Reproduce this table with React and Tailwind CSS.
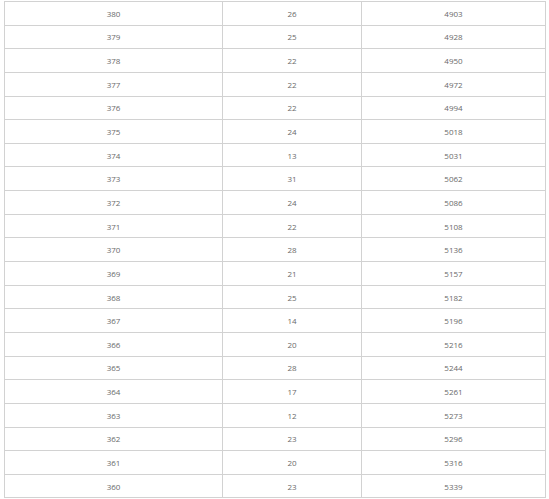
import React from "react";

const rows = [
  [380, 26, 4903],
  [379, 25, 4928],
  [378, 22, 4950],
  [377, 22, 4972],
  [376, 22, 4994],
  [375, 24, 5018],
  [374, 13, 5031],
  [373, 31, 5062],
  [372, 24, 5086],
  [371, 22, 5108],
  [370, 28, 5136],
  [369, 21, 5157],
  [368, 25, 5182],
  [367, 14, 5196],
  [366, 20, 5216],
  [365, 28, 5244],
  [364, 17, 5261],
  [363, 12, 5273],
  [362, 23, 5296],
  [361, 20, 5316],
  [360, 23, 5339],
];

export default function App() {
  return (
    <div className="w-[549px] h-[499px] bg-white overflow-hidden pt-px pl-1" style={{ fontFamily: '"Open Sans", sans-serif' }}>
      <table className="w-[541px] border-collapse table-fixed text-[8px] text-[#6a6a6a]">
        <colgroup>
          <col className="w-[218px]" />
          <col className="w-[139px]" />
          <col className="w-[184px]" />
        </colgroup>
        <tbody>
          {rows.map((r, i) => (
            <tr key={i} className="h-[23.65px]">
              {r.map((v, j) => (
                <td key={j} className="border border-[#d2d2d2] text-center p-0 pt-px leading-none">
                  {v}
                </td>
              ))}
            </tr>
          ))}
        </tbody>
      </table>
    </div>
  );
}
